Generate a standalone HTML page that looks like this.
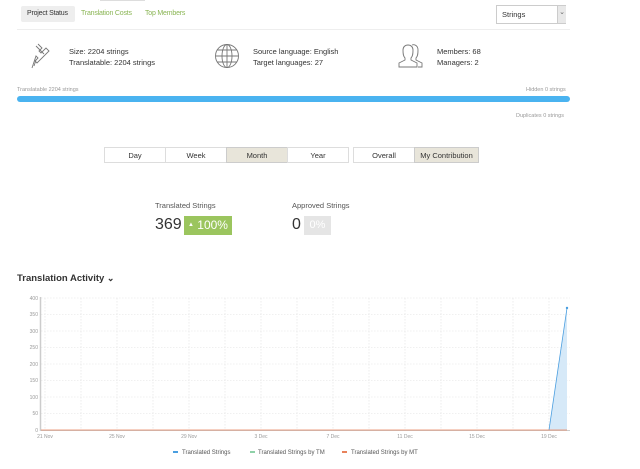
<!DOCTYPE html>
<html><head><meta charset="utf-8"><style>
body{margin:0;width:640px;height:469px;background:#fff;font-family:"Liberation Sans",sans-serif;color:#333;position:relative;overflow:hidden}
.a{position:absolute;white-space:nowrap}
.btn{position:absolute;top:147px;height:16px;border:1px solid #ddd;font-size:7.5px;line-height:16px;text-align:center;background:#fff;box-sizing:border-box}
.sel{background:#e8e5da;border-color:#ccc}
</style></head><body>
<div class="a" style="left:100px;top:0;width:45px;height:1px;background:#ddd"></div>
<div class="a" style="left:21px;top:6px;width:54px;height:16px;background:#eee;border-radius:2px"></div>
<div class="a" style="left:27px;top:10px;font-size:7px;color:#333;letter-spacing:-0.2px">Project Status</div>
<div class="a" style="left:81px;top:10px;font-size:7px;color:#8ab554;letter-spacing:-0.2px">Translation Costs</div>
<div class="a" style="left:145px;top:10px;font-size:7px;color:#8ab554;letter-spacing:-0.2px">Top Members</div>
<div class="a" style="left:17px;top:29px;width:553px;height:1px;background:#eee"></div>
<div class="a" style="left:496px;top:5px;width:70px;height:19px;border:1px solid #ccc;box-sizing:border-box;background:#fff"></div>
<div class="a" style="left:502px;top:10px;font-size:7.5px">Strings</div>
<div class="a" style="left:557px;top:6px;width:8px;height:17px;background:#e8e8e8;border-left:1px solid #ccc;font-size:7px;text-align:center;line-height:14px;color:#666">⌄</div>
<svg class="a" style="left:30px;top:42px" width="26" height="28" viewBox="0 0 26 28" fill="none" stroke="#777" stroke-width="0.9"><path d="M8 2l4 4-3 3 2 2 5-5 3 3-12 12-2-2 3-3-2-2-4 12M6 4l8 8M4 24l2-6"/></svg>
<div class="a" style="left:69px;top:46px;font-size:7.5px;line-height:11px">Size: 2204 strings<br>Translatable: 2204 strings</div>
<svg class="a" style="left:214px;top:43px" width="26" height="26" viewBox="0 0 26 26" fill="none" stroke="#777" stroke-width="0.9"><circle cx="13" cy="13" r="11.5"/><ellipse cx="13" cy="13" rx="5" ry="11.5"/><path d="M13 1.5v23M1.5 13h23M3.5 7h19M3.5 19h19"/></svg>
<div class="a" style="left:253px;top:46px;font-size:7.5px;line-height:11px">Source language: English<br>Target languages: 27</div>
<svg class="a" style="left:398px;top:44px" width="26" height="24" viewBox="0 0 26 24" fill="none" stroke="#777" stroke-width="0.9"><path d="M1 23v-4l6-3v-2c-2-2-2-5-2-8 0-3 2-5 5-5s5 2 5 5c0 3 0 6-2 8v2l6 3v4zM14 1c3-1 6 1 6 5 0 3 0 6-2 8v2l6 3v4h-4"/></svg>
<div class="a" style="left:437px;top:46px;font-size:7.5px;line-height:11px">Members: 68<br>Managers: 2</div>
<div class="a" style="left:17px;top:87px;font-size:5.5px;color:#999">Translatable 2204 strings</div>
<div class="a" style="left:526px;top:87px;font-size:5.5px;color:#999">Hidden 0 strings</div>
<div class="a" style="left:17px;top:96px;width:553px;height:6px;background:#4ab3f0;border-radius:3px"></div>
<div class="a" style="left:516px;top:113px;font-size:5.5px;color:#999">Duplicates 0 strings</div>
<div class="btn" style="left:104px;width:62px">Day</div>
<div class="btn" style="left:165px;width:62px">Week</div>
<div class="btn sel" style="left:226px;width:62px">Month</div>
<div class="btn" style="left:287px;width:62px">Year</div>
<div class="btn" style="left:353px;width:62px">Overall</div>
<div class="btn sel" style="left:414px;width:65px">My Contribution</div>
<div class="a" style="left:155px;top:201px;font-size:7.5px;color:#555">Translated Strings</div>
<div class="a" style="left:155px;top:216px;font-size:16px;color:#333">369</div>
<div class="a" style="left:184px;top:216px;width:48px;height:19px;background:#9bc55e;color:#fff;font-size:12px;line-height:19px;text-align:center"><span style="font-size:6px;vertical-align:3px">▲</span> 100%</div>
<div class="a" style="left:292px;top:201px;font-size:7.5px;color:#555">Approved Strings</div>
<div class="a" style="left:292px;top:216px;font-size:16px;color:#333">0</div>
<div class="a" style="left:304px;top:216px;width:27px;height:19px;background:#e5e5e5;color:#fff;font-size:11px;line-height:19px;text-align:center">0%</div>
<div class="a" style="left:17px;top:273px;font-size:9.5px;font-weight:bold;color:#333">Translation Activity <span style="font-size:9px">⌄</span></div>
<svg class="a" style="left:0;top:290px" width="640" height="179" font-family="Liberation Sans" font-size="5" fill="#999">
<g stroke="#e2e2e2" stroke-dasharray="1.5,1.5" stroke-width="0.6">
<line x1="41" y1="8" x2="570" y2="8"/><line x1="41" y1="24.5" x2="570" y2="24.5"/><line x1="41" y1="41" x2="570" y2="41"/><line x1="41" y1="57.5" x2="570" y2="57.5"/><line x1="41" y1="74" x2="570" y2="74"/><line x1="41" y1="90.5" x2="570" y2="90.5"/><line x1="41" y1="107" x2="570" y2="107"/><line x1="41" y1="123.5" x2="570" y2="123.5"/>
<line x1="45" y1="8" x2="45" y2="140"/><line x1="81" y1="8" x2="81" y2="140"/><line x1="117" y1="8" x2="117" y2="140"/><line x1="153" y1="8" x2="153" y2="140"/><line x1="189" y1="8" x2="189" y2="140"/><line x1="225" y1="8" x2="225" y2="140"/><line x1="261" y1="8" x2="261" y2="140"/><line x1="297" y1="8" x2="297" y2="140"/><line x1="333" y1="8" x2="333" y2="140"/><line x1="369" y1="8" x2="369" y2="140"/><line x1="405" y1="8" x2="405" y2="140"/><line x1="441" y1="8" x2="441" y2="140"/><line x1="477" y1="8" x2="477" y2="140"/><line x1="513" y1="8" x2="513" y2="140"/><line x1="549" y1="8" x2="549" y2="140"/>
</g>
<line x1="40.5" y1="7" x2="40.5" y2="141" stroke="#ccc" stroke-width="1.5"/>
<line x1="40" y1="140.5" x2="570" y2="140.5" stroke="#ccc"/>
<polygon points="549,140 567,18 567,140" fill="#d6e9f8"/>
<polyline points="549,140 567,18" stroke="#4a9ee0" stroke-width="0.8" fill="none"/>
<circle cx="567" cy="18" r="1.2" fill="#4a9ee0"/>
<line x1="41" y1="140" x2="567" y2="140" stroke="#e8825b" stroke-width="0.8"/>
<g text-anchor="end"><text x="38" y="10">400</text><text x="38" y="26">350</text><text x="38" y="43">300</text><text x="38" y="59">250</text><text x="38" y="76">200</text><text x="38" y="92">150</text><text x="38" y="109">100</text><text x="38" y="125">50</text><text x="38" y="142">0</text></g>
<g text-anchor="middle"><text x="45" y="148">21 Nov</text><text x="117" y="148">25 Nov</text><text x="189" y="148">29 Nov</text><text x="261" y="148">3 Dec</text><text x="333" y="148">7 Dec</text><text x="405" y="148">11 Dec</text><text x="477" y="148">15 Dec</text><text x="549" y="148">19 Dec</text></g>
<g font-size="6" fill="#555"><rect x="173" y="161" width="5" height="2" fill="#4a9ee0"/><text x="182" y="164">Translated Strings</text>
<rect x="250" y="161" width="5" height="2" fill="#8fd1a8"/><text x="258" y="164">Translated Strings by TM</text>
<rect x="342" y="161" width="5" height="2" fill="#e8825b"/><text x="351" y="164">Translated Strings by MT</text></g>
</svg>
</body></html>
